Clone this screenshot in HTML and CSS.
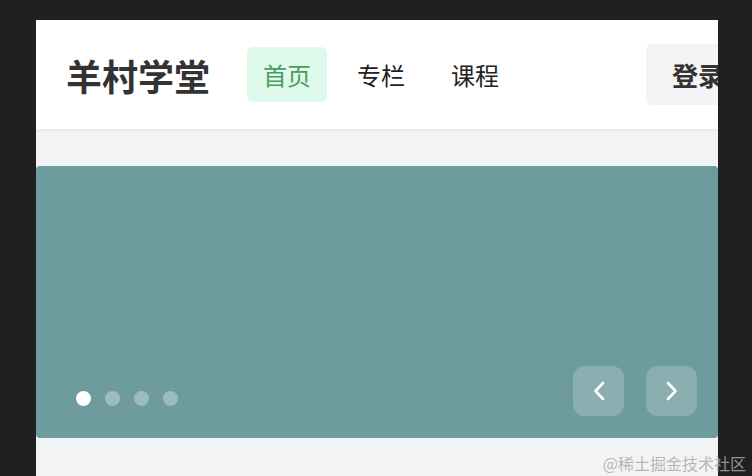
FILE: index.html
```html
<!DOCTYPE html>
<html lang="zh-CN">
<head>
<meta charset="utf-8">
<title>羊村学堂</title>
<link rel="stylesheet" href="styles.css">
</head>
<body>
<div class="frame">
  <header class="header">
    <div class="logo">羊村学堂</div>
    <nav class="nav">
      <a class="nav-item active">首页</a>
      <a class="nav-item">专栏</a>
      <a class="nav-item">课程</a>
    </nav>
    <button class="login">登录</button>
  </header>
  <main class="main">
    <section class="banner">
      <div class="dots">
        <span class="dot on"></span>
        <span class="dot"></span>
        <span class="dot"></span>
        <span class="dot"></span>
      </div>
      <div class="arrows">
        <button class="arrow" aria-label="上一张">
          <svg width="12" height="20" viewBox="0 0 12 20"><path d="M10 2 L2.5 10 L10 18" fill="none" stroke="#fff" stroke-width="2.6" stroke-linecap="round" stroke-linejoin="round"/></svg>
        </button>
        <button class="arrow" aria-label="下一张">
          <svg width="12" height="20" viewBox="0 0 12 20"><path d="M2 2 L9.5 10 L2 18" fill="none" stroke="#fff" stroke-width="2.6" stroke-linecap="round" stroke-linejoin="round"/></svg>
        </button>
      </div>
    </section>
  </main>
</div>
<div class="watermark">@稀土掘金技术社区</div>
</body>
</html>
```

FILE: styles.css
```css
* { box-sizing: border-box; }
html, body { margin: 0; padding: 0; }
body {
  background: #202022;
  font-family: "Noto Sans CJK SC", "Noto Sans", sans-serif;
  width: 752px;
  height: 476px;
  overflow: hidden;
  position: relative;
}
.frame {
  margin: 20px 0 0 36px;
  width: 682px;
  height: 456px;
  background: #f2f3f5;
  overflow: hidden;
}
.header {
  height: 109px;
  background: #fff;
  display: flex;
  align-items: center;
  padding-left: 30px;
  box-shadow: 0 1px 4px rgba(0, 0, 0, 0.06);
  position: relative;
}
.logo {
  font-size: 36px;
  font-weight: 700;
  color: #333;
  line-height: 1;
  letter-spacing: 0;
}
.nav {
  display: flex;
  gap: 14px;
  margin-left: 37px;
}
.nav-item {
  height: 55px;
  padding: 0 16px;
  display: flex;
  align-items: center;
  font-size: 24px;
  color: #222;
  border-radius: 6px;
  line-height: 1;
}
.nav-item.active {
  background: #dff9ea;
  color: #4c9b61;
}
.login {
  margin-left: auto;
  margin-right: -34px;
  height: 61px;
  width: 106px;
  padding: 0 26px;
  border: none;
  border-radius: 6px;
  background: #f3f4f5;
  font-family: inherit;
  font-size: 26px;
  font-weight: 600;
  color: #333;
  text-align: left;
  flex-shrink: 0;
  line-height: 1;
}
.main {
  padding-top: 37px;
}
.banner {
  height: 272px;
  background: #6e9c9e;
  border-radius: 4px;
  display: flex;
  justify-content: space-between;
  align-items: flex-end;
  padding: 0 21px 22px 40px;
}
.dots {
  display: flex;
  gap: 14px;
  margin-bottom: 10px;
}
.dot {
  width: 15px;
  height: 15px;
  border-radius: 50%;
  background: rgba(255, 255, 255, 0.32);
}
.dot.on { background: #fff; }
.arrows {
  display: flex;
  gap: 22px;
}
.arrow {
  width: 51px;
  height: 50px;
  border: none;
  border-radius: 12px;
  background: rgba(255, 255, 255, 0.2);
  display: flex;
  align-items: center;
  justify-content: center;
  padding: 0;
}
.watermark {
  position: absolute;
  right: 6px;
  bottom: 5px;
  font-size: 16px;
  color: rgba(170, 170, 170, 0.85);
  font-family: "Noto Sans CJK SC", sans-serif;
  line-height: 1;
}
```
